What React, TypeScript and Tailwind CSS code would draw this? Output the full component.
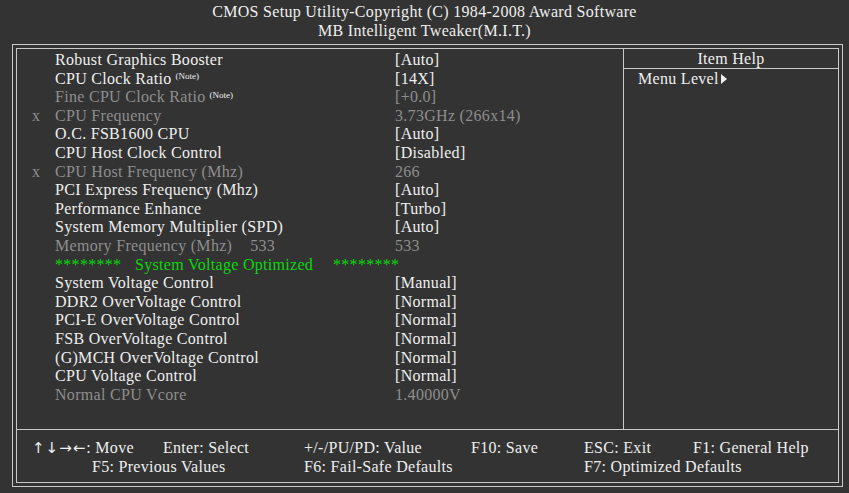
import React from "react";

type Row = {
  label: string;
  value: string;
  dim?: boolean;
  x?: boolean;
  note?: boolean;
  extra?: string;
};

const rowsTop: Row[] = [
  { label: "Robust Graphics Booster", value: "[Auto]" },
  { label: "CPU Clock Ratio", value: "[14X]", note: true },
  { label: "Fine CPU Clock Ratio", value: "[+0.0]", note: true, dim: true },
  { label: "CPU Frequency", value: "3.73GHz (266x14)", dim: true, x: true },
  { label: "O.C. FSB1600 CPU", value: "[Auto]" },
  { label: "CPU Host Clock Control", value: "[Disabled]" },
  { label: "CPU Host Frequency (Mhz)", value: "266", dim: true, x: true },
  { label: "PCI Express Frequency (Mhz)", value: "[Auto]" },
  { label: "Performance Enhance", value: "[Turbo]" },
  { label: "System Memory Multiplier (SPD)", value: "[Auto]" },
  { label: "Memory Frequency (Mhz)", value: "533", dim: true, extra: "533" },
];

const rowsBottom: Row[] = [
  { label: "System Voltage Control", value: "[Manual]" },
  { label: "DDR2 OverVoltage Control", value: "[Normal]" },
  { label: "PCI-E OverVoltage Control", value: "[Normal]" },
  { label: "FSB OverVoltage Control", value: "[Normal]" },
  { label: "(G)MCH OverVoltage Control", value: "[Normal]" },
  { label: "CPU Voltage Control", value: "[Normal]" },
  { label: "Normal CPU Vcore", value: "1.40000V", dim: true },
];

function SetupRow({ row }: { row: Row }) {
  const color = row.dim ? "text-[#8e8e8e]" : "text-[#efefef]";
  return (
    <div className={`flex h-[18.6px] items-center ${color}`}>
      <div className="w-[23px]">{row.x ? "x" : ""}</div>
      <div className="w-[340px] whitespace-nowrap">
        {row.label}
        {row.note && (
          <sup className="ml-[4px] text-[9px] tracking-normal text-[#efefef]">(Note)</sup>
        )}
        {row.extra && <span className="ml-[18px]">{row.extra}</span>}
      </div>
      <div className="whitespace-nowrap">{row.value}</div>
    </div>
  );
}

export default function App() {
  return (
    <div
      className="w-[849px] h-[493px] bg-[#333333] text-[16px] tracking-[0.3px] text-[#efefef] overflow-hidden"
      style={{ fontFamily: '"Liberation Serif", "Times New Roman", serif' }}
    >
      {/* title */}
      <div className="h-[44px] pt-[3px] text-center leading-[18.6px]">
        <div>CMOS Setup Utility-Copyright (C) 1984-2008 Award Software</div>
        <div>MB Intelligent Tweaker(M.I.T.)</div>
      </div>

      {/* double frame */}
      <div className="ml-[12px] w-[831px] h-[443px] border border-[#c8c8c8] p-[3px]">
        <div className="h-full border border-[#c8c8c8] flex flex-col">
          <div className="flex h-[380px] leading-[18.6px]">
            {/* settings list */}
            <div className="w-[606px] pt-[2px] pl-[15px]">
              {rowsTop.map((r) => (
                <SetupRow key={r.label} row={r} />
              ))}
              <div className="flex h-[18.6px] items-center text-[#0ad80a] pl-[23px] whitespace-nowrap">
                <span className="w-[80px]">********</span>
                <span className="w-[198px]">System Voltage Optimized</span>
                <span>********</span>
              </div>
              {rowsBottom.map((r) => (
                <SetupRow key={r.label} row={r} />
              ))}
            </div>

            {/* item help */}
            <div className="flex-1 border-l border-[#c8c8c8] flex flex-col">
              <div className="h-[20px] border-b border-[#c8c8c8] text-center leading-[19px]">
                Item Help
              </div>
              <div className="pl-[14px] pt-[1px] flex items-center">
                <span>Menu Level</span>
                <svg width="8" height="10" viewBox="0 0 8 10" className="ml-[1px]">
                  <path d="M1 0 L7 5 L1 10 Z" fill="#efefef" />
                </svg>
              </div>
            </div>
          </div>

          {/* key help */}
          <div className="flex-1 border-t border-[#c8c8c8] pt-[9px] leading-[18.6px] whitespace-nowrap">
            <div className="flex pl-[15px]">
              <span className="w-[131px]">
                <span
                  style={{ fontFamily: '"DejaVu Sans", sans-serif' }}
                  className="text-[15px] tracking-[1px]"
                >
                  ↑↓→←
                </span>
                : Move
              </span>
              <span className="w-[141px]">Enter: Select</span>
              <span className="w-[167px]">+/-/PU/PD: Value</span>
              <span className="w-[113px]">F10: Save</span>
              <span className="w-[109px]">ESC: Exit</span>
              <span>F1: General Help</span>
            </div>
            <div className="flex pl-[75px]">
              <span className="w-[212px]">F5: Previous Values</span>
              <span className="w-[280px]">F6: Fail-Safe Defaults</span>
              <span>F7: Optimized Defaults</span>
            </div>
          </div>
        </div>
      </div>
    </div>
  );
}
